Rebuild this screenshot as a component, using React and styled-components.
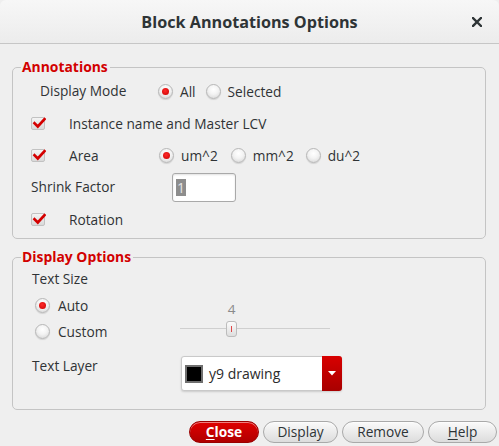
import React from "react";
import styled, { createGlobalStyle } from "styled-components";

const GlobalStyle = createGlobalStyle`
  html, body { margin: 0; padding: 0; background: #efefef; }
  body {
    font-family: "Open Sans", "Noto Sans", "DejaVu Sans", sans-serif;
    font-size: 13.7px;
    color: #2f3335;
  }
  * { box-sizing: border-box; }
`;

const Window = styled.div`
  width: 499px;
  height: 446px;
  display: flex;
  flex-direction: column;
  background: #efefef;
  border-top-right-radius: 6px;
  border-top-left-radius: 6px;
  overflow: hidden;
`;

const TitleBar = styled.div`
  height: 44px;
  flex: none;
  display: grid;
  grid-template-columns: 1fr auto 1fr;
  align-items: center;
  background: linear-gradient(#f7f7f7, #ececec);
  border-bottom: 1px solid #c6c6c6;
`;

const Title = styled.div`
  grid-column: 2;
  font-weight: bold;
  font-size: 16.2px;
  color: #2e3436;
`;

const CloseX = styled.div`
  grid-column: 3;
  justify-self: end;
  padding-right: 17px;
  display: flex;
  align-items: center;
`;

const Content = styled.div`
  padding: 15px 13px 0 12px;
  display: flex;
  flex-direction: column;
`;

const Group = styled.fieldset`
  margin: ${(p) => p.$mt || 0}px 0 0 0;
  padding: 0 0 ${(p) => p.$pb || 0}px 0;
  border: 1px solid #c4c4c4;
  border-radius: 5px;
  min-width: 0;
`;

const Legend = styled.legend`
  margin-left: 8px;
  padding: 0 2px 0 1px;
  color: #d20000;
  font-weight: bold;
  font-size: 13.9px;
  line-height: 16px;
`;

const Row = styled.div`
  height: ${(p) => p.$h || 32}px;
  display: flex;
  align-items: ${(p) => (p.$top ? "flex-start" : "center")};
  padding-left: ${(p) => p.$indent || 0}px;
  padding-top: ${(p) => p.$pt || 0}px;
`;

const Label = styled.span`
  width: ${(p) => (p.$w ? `${p.$w}px` : "auto")};
  flex: none;
  line-height: 20px;
  white-space: nowrap;
`;

const CheckCell = styled.label`
  display: flex;
  align-items: center;
  width: ${(p) => (p.$w ? `${p.$w}px` : "auto")};
  flex: none;
`;

const CheckBox = styled.span`
  width: 14px;
  height: 13px;
  flex: none;
  position: relative;
  border: 1px solid #c2c2c2;
  border-radius: 2px;
  background: linear-gradient(#f4f4f4, #d9d9d9);
  margin-right: 24px;
  svg { position: absolute; left: 0px; top: -2px; }
`;

const RadioGroup = styled.div`
  display: flex;
  align-items: center;
`;

const RadioItem = styled.label`
  display: flex;
  align-items: center;
  margin-right: ${(p) => p.$gap || 0}px;
`;

const RadioDot = styled.span`
  width: 15px;
  height: 15px;
  flex: none;
  border-radius: 50%;
  border: 1px solid #b7b7b7;
  background: radial-gradient(circle at 50% 35%, #ffffff 0%, #f3f3f3 45%, #d2d2d2 100%);
  box-shadow: 0 1px 1px rgba(0, 0, 0, 0.12);
  margin-right: ${(p) => p.$mr || 7}px;
  display: flex;
  align-items: center;
  justify-content: center;
  &::after {
    content: "";
    display: ${(p) => (p.$on ? "block" : "none")};
    width: 7px;
    height: 7px;
    border-radius: 50%;
    background: radial-gradient(circle at 45% 40%, #ff2a2a, #c80000);
  }
`;

const TextInput = styled.div`
  width: 64px;
  height: 29px;
  border: 1px solid #a9a9a9;
  border-radius: 3px;
  background: #fff;
  box-shadow: inset 0 1px 2px rgba(0, 0, 0, 0.12);
  display: flex;
  align-items: center;
  padding-left: 3px;
`;

const Selection = styled.span`
  background: #8d8d8d;
  color: #e4e4e4;
  line-height: 17px;
  padding: 0 1px;
  font-size: 14px;
`;

const RadioSection = styled.div`
  display: grid;
  grid-template-columns: 145px auto;
  grid-template-rows: 25px 26px;
  padding-left: 22px;
`;

const RadioRow = styled.label`
  display: flex;
  align-items: center;
`;

const SliderBlock = styled.div`
  grid-column: 2;
  grid-row: 1 / span 2;
  display: flex;
  flex-direction: column;
  padding-top: 8px;
`;

const SliderValue = styled.div`
  width: 11px;
  margin-left: 46px;
  text-align: center;
  color: #8a8a8a;
  font-size: 13.5px;
  line-height: 16px;
`;

const Track = styled.div`
  position: relative;
  width: 150px;
  height: 16px;
  margin-top: 4px;
  &::before {
    content: "";
    position: absolute;
    left: 0;
    right: 0;
    top: 7px;
    height: 1px;
    background: #cfcfcf;
  }
`;

const Handle = styled.div`
  position: absolute;
  left: 46px;
  top: 0;
  width: 11px;
  height: 16px;
  border: 1px solid #bcbcbc;
  border-radius: 3px;
  background: linear-gradient(#fbfbfb, #dedede);
  display: flex;
  justify-content: center;
  align-items: center;
  &::after {
    content: "";
    width: 1px;
    height: 6px;
    background: #e04848;
  }
`;

const Dropdown = styled.div`
  width: 161px;
  height: 35px;
  display: flex;
  align-items: stretch;
  background: #fff;
  border: 1px solid #c9c9c9;
  border-radius: 3px;
  box-shadow: 0 1px 2px rgba(0, 0, 0, 0.15);
`;

const Swatch = styled.span`
  width: 18px;
  height: 18px;
  align-self: center;
  margin-left: 3px;
  margin-right: 6px;
  background: #000;
  border: 2px solid #6f6f6f;
  flex: none;
`;

const DropText = styled.span`
  flex: 1;
  align-self: center;
  font-size: 14px;
  color: #2b2b2b;
`;

const DropButton = styled.span`
  width: 20px;
  flex: none;
  margin: -1px -1px -1px 0;
  background: linear-gradient(#d80000, #a80000);
  border-radius: 0 3px 3px 0;
  display: flex;
  align-items: center;
  justify-content: center;
`;

const ButtonBar = styled.div`
  display: flex;
  justify-content: flex-end;
  gap: 4px;
  margin-top: 11px;
  padding-right: 2px;
`;

const Button = styled.button`
  width: ${(p) => p.$w}px;
  height: 22px;
  border-radius: 11px;
  font-family: inherit;
  font-size: 13.7px;
  padding: 0;
  line-height: 20px;
  cursor: pointer;
  border: 1px solid ${(p) => (p.$primary ? "#9a0000" : "#a9a9a9")};
  background: ${(p) =>
    p.$primary
      ? "linear-gradient(#e00000, #b00000)"
      : "linear-gradient(#fafafa, #dcdcdc)"};
  color: ${(p) => (p.$primary ? "#ffffff" : "#2e3436")};
  font-weight: ${(p) => (p.$primary ? "bold" : "normal")};
  box-shadow: inset 0 1px 0 rgba(255, 255, 255, 0.5);
  u { text-decoration: underline; text-underline-offset: 2px; }
`;

const Check = () => (
  <CheckBox>
    <svg width="14" height="14" viewBox="0 0 14 14">
      <path d="M2.5 7.2 L5.8 10.5 L12.5 3.2" fill="none" stroke="#d40000" strokeWidth="2.6" strokeLinecap="square" />
    </svg>
  </CheckBox>
);

const Radio = ({ on, label, gap, mr }) => (
  <RadioItem $gap={gap}>
    <RadioDot $on={on} $mr={mr} />
    <span>{label}</span>
  </RadioItem>
);

export default function App() {
  return (
    <>
      <GlobalStyle />
      <Window>
        <TitleBar>
          <Title>Block Annotations Options</Title>
          <CloseX>
            <svg width="10" height="10" viewBox="0 0 10 10">
              <path d="M1 1 L9 9 M9 1 L1 9" stroke="#2e3436" strokeWidth="2.4" strokeLinecap="square" />
            </svg>
          </CloseX>
        </TitleBar>
        <Content>
          <Group $pb={3}>
            <Legend>Annotations</Legend>
            <Row $indent={27}>
              <Label $w={118}>Display Mode</Label>
              <RadioGroup>
                <Radio on label="All" gap={10} />
                <Radio label="Selected" />
              </RadioGroup>
            </Row>
            <Row $indent={18}>
              <CheckCell>
                <Check />
                <span>Instance name and Master LCV</span>
              </CheckCell>
            </Row>
            <Row $indent={18}>
              <CheckCell $w={128}>
                <Check />
                <span>Area</span>
              </CheckCell>
              <RadioGroup>
                <Radio on label="um^2" gap={13} />
                <Radio label="mm^2" gap={12} />
                <Radio label="du^2" />
              </RadioGroup>
            </Row>
            <Row $indent={18}>
              <Label $w={141}>Shrink Factor</Label>
              <TextInput>
                <Selection>1</Selection>
              </TextInput>
            </Row>
            <Row $indent={18}>
              <CheckCell>
                <Check />
                <span>Rotation</span>
              </CheckCell>
            </Row>
          </Group>

          <Group $mt={10} $pb={17}>
            <Legend>Display Options</Legend>
            <Row $indent={19} $h={28}>
              <Label>Text Size</Label>
            </Row>
            <RadioSection>
              <RadioRow>
                <RadioDot $on $mr={8} />
                <span>Auto</span>
              </RadioRow>
              <SliderBlock>
                <SliderValue>4</SliderValue>
                <Track>
                  <Handle />
                </Track>
              </SliderBlock>
              <RadioRow>
                <RadioDot $mr={8} />
                <span>Custom</span>
              </RadioRow>
            </RadioSection>
            <Row $indent={19} $h={48} $pt={12} $top>
              <Label $w={149}>Text Layer</Label>
              <Dropdown>
                <Swatch />
                <DropText>y9 drawing</DropText>
                <DropButton>
                  <svg width="8" height="5" viewBox="0 0 8 5">
                    <path d="M0 0 L8 0 L4 4.5 Z" fill="#fff" />
                  </svg>
                </DropButton>
              </Dropdown>
            </Row>
          </Group>
        </Content>
        <ButtonBar>
          <Button $primary $w={70}>
            <u>C</u>lose
          </Button>
          <Button $w={75}>Display</Button>
          <Button $w={82}>Remove</Button>
          <Button $w={69}>
            <u>H</u>elp
          </Button>
        </ButtonBar>
      </Window>
    </>
  );
}
